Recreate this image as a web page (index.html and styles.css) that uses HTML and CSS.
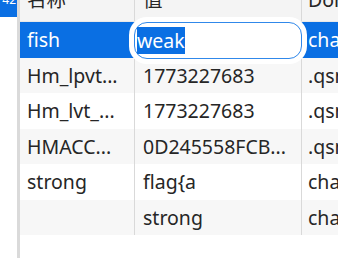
FILE: index.html
```html
<!DOCTYPE html>
<html lang="zh">

<head>
    <meta charset="UTF-8">
    <title>Cookies</title>
    <link rel="stylesheet" href="styles.css">
</head>

<body>
    <div class="window">
        <div class="gutter">
            <div class="tab">42</div>
        </div>
        <div class="rail"></div>
        <div class="grid">
            <div class="row head">
                <div class="cell c1">名称</div>
                <div class="cell c2">值</div>
                <div class="cell c3">Domain</div>
            </div>
            <div class="row sel">
                <div class="cell c1">fish</div>
                <div class="cell c2">
                    <div class="editor"><span class="picked">weak</span></div>
                </div>
                <div class="cell c3">challenge.qsnctf.com</div>
            </div>
            <div class="row alt">
                <div class="cell c1">Hm_lpvt...</div>
                <div class="cell c2">1773227683</div>
                <div class="cell c3">.qsnctf.com</div>
            </div>
            <div class="row">
                <div class="cell c1">Hm_lvt_...</div>
                <div class="cell c2">1773227683</div>
                <div class="cell c3">.qsnctf.com</div>
            </div>
            <div class="row alt">
                <div class="cell c1">HMACC...</div>
                <div class="cell c2">0D245558FCB...</div>
                <div class="cell c3">.qsnctf.com</div>
            </div>
            <div class="row">
                <div class="cell c1">strong</div>
                <div class="cell c2">flag{a</div>
                <div class="cell c3">challenge.qsnctf.com</div>
            </div>
            <div class="row alt">
                <div class="cell c1"></div>
                <div class="cell c2">strong</div>
                <div class="cell c3">challenge.qsnctf.com</div>
            </div>
        </div>
    </div>
</body>

</html>
```

FILE: styles.css
```css
body {
    margin: 0;
    background: #ffffff;
    font-family: "Noto Sans", "Noto Sans CJK SC", sans-serif;
    font-size: 19.5px;
    color: #262626;
    overflow: hidden;
}

.window {
    display: flex;
    width: 338px;
    height: 258px;
    overflow: hidden;
}

.gutter {
    width: 17px;
    flex-shrink: 0;
}

/* only the bottom edge of the tab label is in view */
.tab {
    width: 17px;
    height: 17px;
    background-color: #0a6fe3;
    color: #ffffff;
    font-size: 12px;
    line-height: 0;
    text-align: right;
    padding-right: 1px;
    box-sizing: border-box;
    overflow: hidden;
}

.rail {
    width: 3px;
    flex-shrink: 0;
    background-color: #dadada;
}

.grid {
    flex: 1;
    overflow: hidden;
}

.row {
    display: flex;
    height: 35.5px;
}

.row.alt {
    background-color: #f7f7f7;
}

.cell {
    flex-shrink: 0;
    box-sizing: border-box;
    padding-left: 7px;
    line-height: 35.5px;
    white-space: nowrap;
    overflow: hidden;
    border-right: 1px solid #d9d9d9;
}

.c1 {
    width: 115px;
}

.c2 {
    width: 167px;
    padding-left: 8px;
}

.c3 {
    width: 220px;
    padding-left: 6px;
    border-right: none;
}

/* header is scrolled so only its lower part shows */
.head {
    height: 21px;
    overflow: hidden;
    background-color: #f4f4f4;
    border-bottom: 1px solid #e8e8e8;
}

.head .cell {
    margin-top: -18px;
    height: 39px;
    line-height: 36px;
}

.sel {
    background-color: #0a6fe3;
    color: #ffffff;
}

.sel .cell {
    border-right-color: #0a6fe3;
}

.sel .c2 {
    position: relative;
    overflow: visible;
}

.editor {
    position: absolute;
    left: -1px;
    top: 0;
    width: 168px;
    height: 37px;
    box-sizing: border-box;
    border: 1.5px solid #3088ea;
    border-radius: 13px;
    background-color: #ffffff;
    box-shadow: 0 0 0 5px #ffffff;
    padding-left: 2px;
    display: flex;
    align-items: center;
    line-height: normal;
}

.picked {
    background-color: #0a6fe3;
    color: #ffffff;
}
```
